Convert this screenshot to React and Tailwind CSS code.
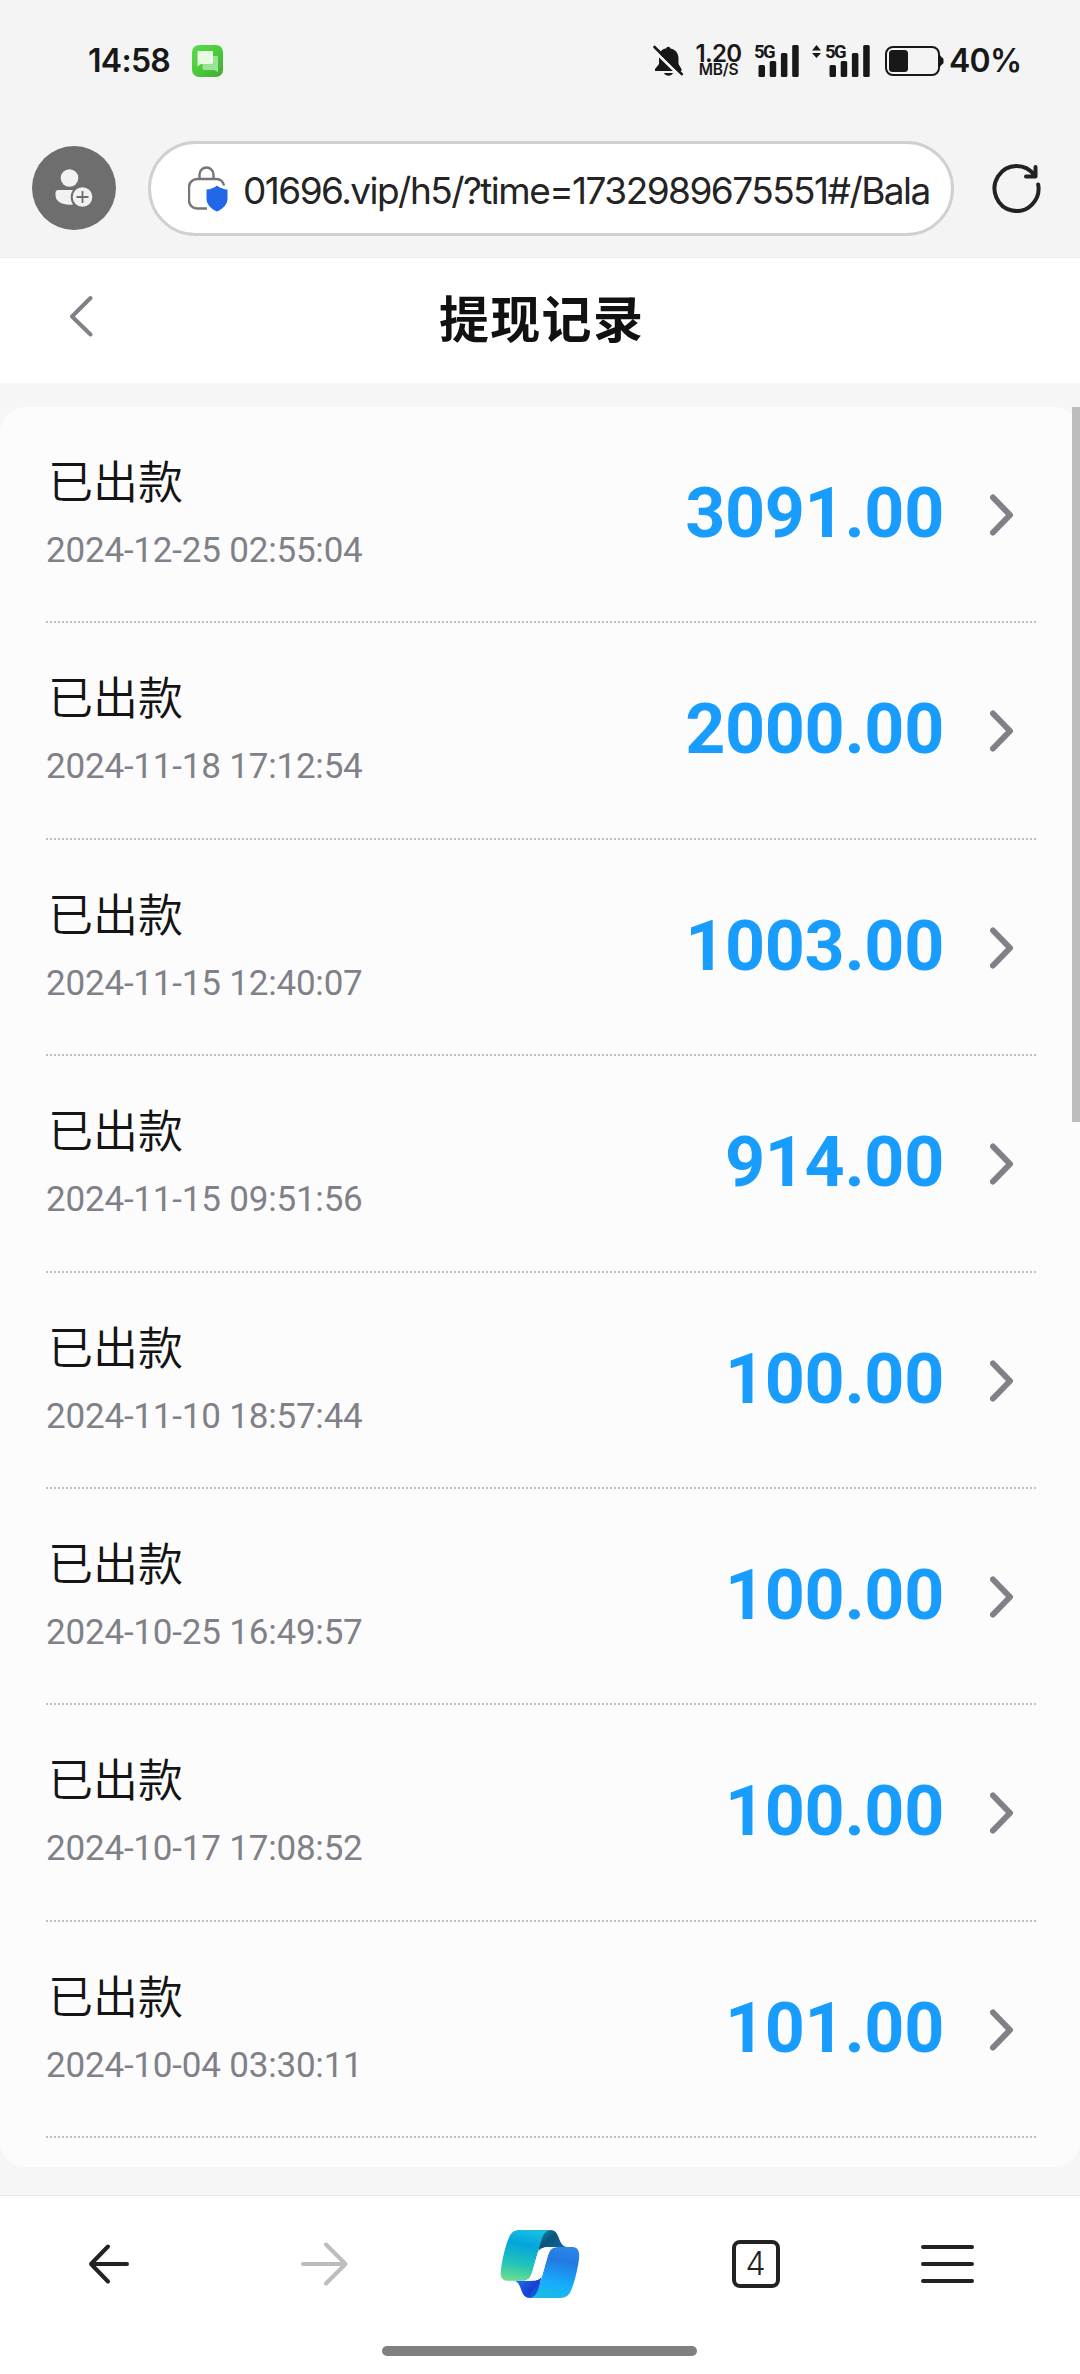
import React from 'react';

const records = [
  { status: '已出款', time: '2024-12-25 02:55:04', amount: '3091.00' },
  { status: '已出款', time: '2024-11-18 17:12:54', amount: '2000.00' },
  { status: '已出款', time: '2024-11-15 12:40:07', amount: '1003.00' },
  { status: '已出款', time: '2024-11-15 09:51:56', amount: '914.00' },
  { status: '已出款', time: '2024-11-10 18:57:44', amount: '100.00' },
  { status: '已出款', time: '2024-10-25 16:49:57', amount: '100.00' },
  { status: '已出款', time: '2024-10-17 17:08:52', amount: '100.00' },
  { status: '已出款', time: '2024-10-04 03:30:11', amount: '101.00' },
];

const MessageIcon = () => (
  <svg className="ml-[21px] h-8 w-[31px]" viewBox="0 0 31 32">
    <defs>
      <linearGradient id="msg" x1="0" y1="0" x2="1" y2="1">
        <stop offset="0" stopColor="#5edb50" />
        <stop offset="0.5" stopColor="#4bcb3a" />
        <stop offset="1" stopColor="#43a936" />
      </linearGradient>
    </defs>
    <rect width="31" height="32" rx="7" fill="url(#msg)" />
    <path d="M12 11h13a1 1 0 0 1 1 1v15l-4-2H12.500a2 2 0 0 1-2-2V12z" fill="#9be394" />
    <path d="M6.500 6H20a1 1 0 0 1 1 1v10a2 2 0 0 1-2 2H9l-3.500 2.500V7a1 1 0 0 1 1-1z" fill="#e6fae4" />
  </svg>
);

const MutedBell = () => (
  <svg className="h-[31px] w-[31px]" viewBox="0 0 31 31" fill="#181818">
    <path d="M13 3.500a2.300 2.300 0 0 1 4.500 0c5.300 1 8 5 8 10v5.500l3 5v2H2v-2l4-5v-6c0-5 2-9 7-9.500z" />
    <path d="M11 28h9c-1.500 3.500-7.500 3.500-9 0z" />
    <path d="M0 4.500L26 30" stroke="#f4f4f4" strokeWidth="3" />
    <path d="M1.500 2L28.800 29.200" stroke="#181818" strokeWidth="2.600" strokeLinecap="round" />
  </svg>
);

const Signal = () => (
  <div className="relative h-8 w-[45px] text-[#181818]">
    <span className="absolute -top-[3px] left-0 font-['Roboto'] text-[18.500px] leading-[20px] font-bold tracking-[-1.5px]">5G</span>
    <svg className="absolute inset-0 h-8 w-[45px]" viewBox="0 0 45 32" fill="currentColor">
      <rect x="4.500" y="20" width="6.500" height="12" rx="1.500" />
      <rect x="15.700" y="16" width="6.500" height="16" rx="1.500" />
      <rect x="26.900" y="8" width="6.500" height="24" rx="1.500" />
      <rect x="38.200" y="0" width="6.500" height="32" rx="1.500" />
    </svg>
  </div>
);

const Battery = () => (
  <svg className="ml-[15px] h-[30px] w-[60px]" viewBox="0 0 60 30">
    <rect x="1" y="1" width="53" height="28" rx="7" fill="none" stroke="#181818" strokeWidth="2" />
    <rect x="4" y="4" width="19" height="22" rx="3.500" fill="#181818" />
    <path d="M54 9.500h1.500c1 2.500 3 2 3 4v3c0 2-2 1.500-3 4H54z" fill="#181818" />
  </svg>
);

const StatusBar = () => (
  <div className="flex h-[120px] shrink-0 items-center pt-px pl-[88px] font-['Inter'] text-[#181818]">
    <span className="w-[83px] pt-px text-[32px] leading-8 font-semibold tracking-[-0.7px]">14:58</span>
    <MessageIcon />
    <div className="ml-[430px] flex items-center">
      <MutedBell />
      <div className="ml-[11px] flex w-[47px] flex-col items-center">
        <span className="text-[24px] leading-[19px] font-semibold tracking-[-0.6px]">1.20</span>
        <span className="text-[15.500px] leading-[14px] font-semibold tracking-[-0.2px]">MB/S</span>
      </div>
      <div className="ml-[12px]">
        <Signal />
      </div>
      <svg className="mb-[18px] ml-[13px] h-3.5 w-[9px]" viewBox="0 0 9 14" fill="#181818">
        <path d="M4.500 0L9 5.500H0zM4.500 13L9 8H0z" />
      </svg>
      <div className="ml-1">
        <Signal />
      </div>
      <Battery />
      <span className="ml-[4px] pt-px text-[32px] leading-8 font-semibold tracking-[-0.7px]">40%</span>
    </div>
  </div>
);

const AddressBar = () => (
  <div className="flex h-[137px] shrink-0 items-start pt-[21px] pl-8">
    <div className="mt-[5px] flex h-[84px] w-[84px] items-center justify-center rounded-full bg-[#6e6e6e]">
      <svg className="h-[38px] w-[38px]" viewBox="0 0 38 38" fill="#f2f2f2">
        <circle cx="14.500" cy="9" r="8.800" />
        <path d="M3.500 21H18c-3 4-3 10 0 14.500C8 36.500.500 33 .500 26v-2a3 3 0 0 1 3-3z" />
        <circle cx="27.500" cy="28" r="9.800" />
        <path d="M27.500 22v12M21.500 28h12" stroke="#6e6e6e" strokeWidth="1.800" />
      </svg>
    </div>
    <div className="ml-8 flex h-[95px] w-[806px] items-center rounded-full border-3 border-[#d0d0d0] bg-white pl-[37px]">
      <svg className="h-[46px] w-[40px] shrink-0" viewBox="0 0 40 46" fill="none">
        <path d="M11.500 12.500V8.500a7 7 0 0 1 14 0v4M19 42.500H9a8 8 0 0 1-8-8V21a8 8 0 0 1 8-8h19.500a7.500 7.500 0 0 1 7.500 6.500" stroke="#767676" strokeWidth="2.400" />
        <path d="M29 19.500c3 2.500 6.500 3.800 10.500 4v9c0 6-4.500 10.500-10.500 13-6-2.500-10.500-7-10.500-13v-9c4-.2 7.500-1.500 10.500-4z" fill="#2267e8" />
      </svg>
      <div className="ml-[15px] pt-[4px] font-['Inter'] text-[37px] leading-[54px] whitespace-nowrap text-[#242424] tracking-[-1.55px]">
        01696.vip/h5/?time=1732989675551#/Bala
      </div>
    </div>
    <svg className="mt-[22px] ml-[38px] h-[50px] w-[50px]" viewBox="0 0 50 50" fill="none" stroke="#222" strokeWidth="4" strokeLinecap="round" strokeLinejoin="round">
      <path d="M46.200 21.500A22 22.500 0 1 1 42.500 12.500" />
      <path d="M43.500 4v9.500h-9.500" />
    </svg>
  </div>
);

const RecordRow = ({ record }) => (
  <div className="flex h-[216.4px] items-start border-b-2 border-dotted border-[#c0c0c0]">
    <div className="flex-1 pt-[43px]">
      <p className="pl-0.5 font-['Noto_Sans_CJK_SC',sans-serif] text-[45px] leading-[60px] font-[350] text-[#141414]">{record.status}</p>
      <p className="mt-[20px] font-['Roboto'] text-[35px] leading-[42px] tracking-[-0.2px] text-[#808188]">{record.time}</p>
    </div>
    <span className="mt-[65px] font-['Roboto'] text-[70px] leading-[82px] font-bold tracking-[-0.35px] text-[#189cfe]">{record.amount}</span>
    <svg className="mt-[87px] mr-[22px] ml-[46px] h-[42px] w-6" viewBox="0 0 24 42" fill="none" stroke="#808188" strokeWidth="6" strokeLinecap="round" strokeLinejoin="round">
      <path d="M3 3.500L20 21L3 38.500" />
    </svg>
  </div>
);

const CopilotLogo = () => (
  <svg className="h-[70px] w-20" viewBox="60 60 240 210">
    <defs>
      <linearGradient id="left" x1="0.6" y1="0" x2="0.4" y2="1">
        <stop offset="0" stopColor="#16bfe0" />
        <stop offset="0.3" stopColor="#04a4dc" />
        <stop offset="0.7" stopColor="#22c4b8" />
        <stop offset="1" stopColor="#68dc90" />
      </linearGradient>
      <linearGradient id="right" x1="0.6" y1="0" x2="0.4" y2="1">
        <stop offset="0" stopColor="#2a86e8" />
        <stop offset="0.25" stopColor="#2379e2" />
        <stop offset="0.7" stopColor="#16adfc" />
        <stop offset="1" stopColor="#19bde4" />
      </linearGradient>
      <linearGradient id="fold" x1="0" y1="0" x2="1" y2="1">
        <stop offset="0" stopColor="#0a90b4" />
        <stop offset="0.4" stopColor="#0e527c" />
        <stop offset="1" stopColor="#0b72ac" />
      </linearGradient>
      <linearGradient id="tail" x1="0" y1="0" x2="1" y2="0.7">
        <stop offset="0" stopColor="#1e7ff0" />
        <stop offset="0.7" stopColor="#183fd2" />
        <stop offset="1" stopColor="#1868e0" />
      </linearGradient>
    </defs>
    <path d="M180 63H212C242 63 232 112 262 114H210C190 114 183 118 176 130z" fill="url(#fold)" />
    <path d="M184 204L172 267H150C116 267 130 218 100 215H150C168 215 177 212 184 204z" fill="url(#tail)" />
    <path d="M118 63H212C194 65 188 80 183 97L157 188C151 207 145 215 125 215H82C62 215 60 198 63 180C68 144 78 104 88 83C95 69 104 63 118 63z" fill="url(#left)" />
    <path d="M242 267H148C166 265 172 250 177 233L203 142C209 123 215 114 235 114H277C297 114 299 132 297 150C292 186 282 226 272 247C265 261 256 267 242 267z" fill="url(#right)" />
    <path d="M210 114H232C214 115 209 123 203 142L187 198C182 212 172 215 155 215H130C146 214 151 207 157 188L173 132C178 118 190 114 210 114z" fill="#fff" />
  </svg>
);

const BottomNav = () => (
  <div className="flex h-[179px] shrink-0 flex-col border-t border-[#e9e9e9] bg-white">
    <div className="flex h-[136px] items-center pr-[106px] pl-[88px]">
      <svg className="h-11 w-[42px]" viewBox="0 0 42 44" fill="none" stroke="#222" strokeWidth="4" strokeLinecap="round" strokeLinejoin="round">
        <path d="M39 22H3M20 4.500L3 22l17 17.500" />
      </svg>
      <svg className="ml-[170px] h-11 w-[48px]" viewBox="0 0 48 44" fill="none" stroke="#bdbdbd" strokeWidth="4" strokeLinecap="round" strokeLinejoin="round">
        <path d="M3 22h42M26 2.500L45.500 22L26 41.500" />
      </svg>
      <div className="ml-[152px]">
        <CopilotLogo />
      </div>
      <div className="ml-[152px] flex h-12 w-12 items-center justify-center rounded-[8px] border-4 border-[#222] pr-px font-['Inter'] text-[32px] leading-8 font-light text-[#222]">
        4
      </div>
      <svg className="ml-auto h-11 w-[53px]" viewBox="0 0 53 44" fill="none" stroke="#222" strokeWidth="4" strokeLinecap="round">
        <path d="M2 5h49M2 22h49M2 39h49" />
      </svg>
    </div>
    <div className="mt-[14px] ml-[382px] h-2.5 w-[315px] rounded-full bg-[#808080]" />
  </div>
);

export default function App() {
  return (
    <div className="flex h-[2374px] w-[1080px] flex-col overflow-hidden bg-[#f4f4f4]">
      <StatusBar />
      <AddressBar />
      <header className="flex h-[126px] shrink-0 items-center border-t border-[#ececec] bg-white pl-[69px]">
        <svg className="mb-[9px] h-[42px] w-6" viewBox="0 0 24 42" fill="none" stroke="#808188" strokeWidth="4" strokeLinecap="round" strokeLinejoin="round">
          <path d="M21.500 3L3 21.500L21.500 39.500" />
        </svg>
        <h1 className="mb-[10px] ml-[346px] font-['Noto_Sans_CJK_SC',sans-serif] text-[50px] leading-[60px] font-bold tracking-[1.3px] text-[#111]">提现记录</h1>
      </header>
      <main className="relative flex-1 bg-[#f6f6f6] pt-6">
        <div className="h-[1760px] overflow-hidden rounded-[26px] bg-[#fcfcfc] pr-11 pl-[46px]">
          {records.map((record) => (
            <RecordRow key={record.time} record={record} />
          ))}
        </div>
        {/* scroll thumb */}
        <div className="absolute top-6 right-0 h-[715px] w-2 bg-[#bdbdbd]" />
      </main>
      <BottomNav />
    </div>
  );
}
